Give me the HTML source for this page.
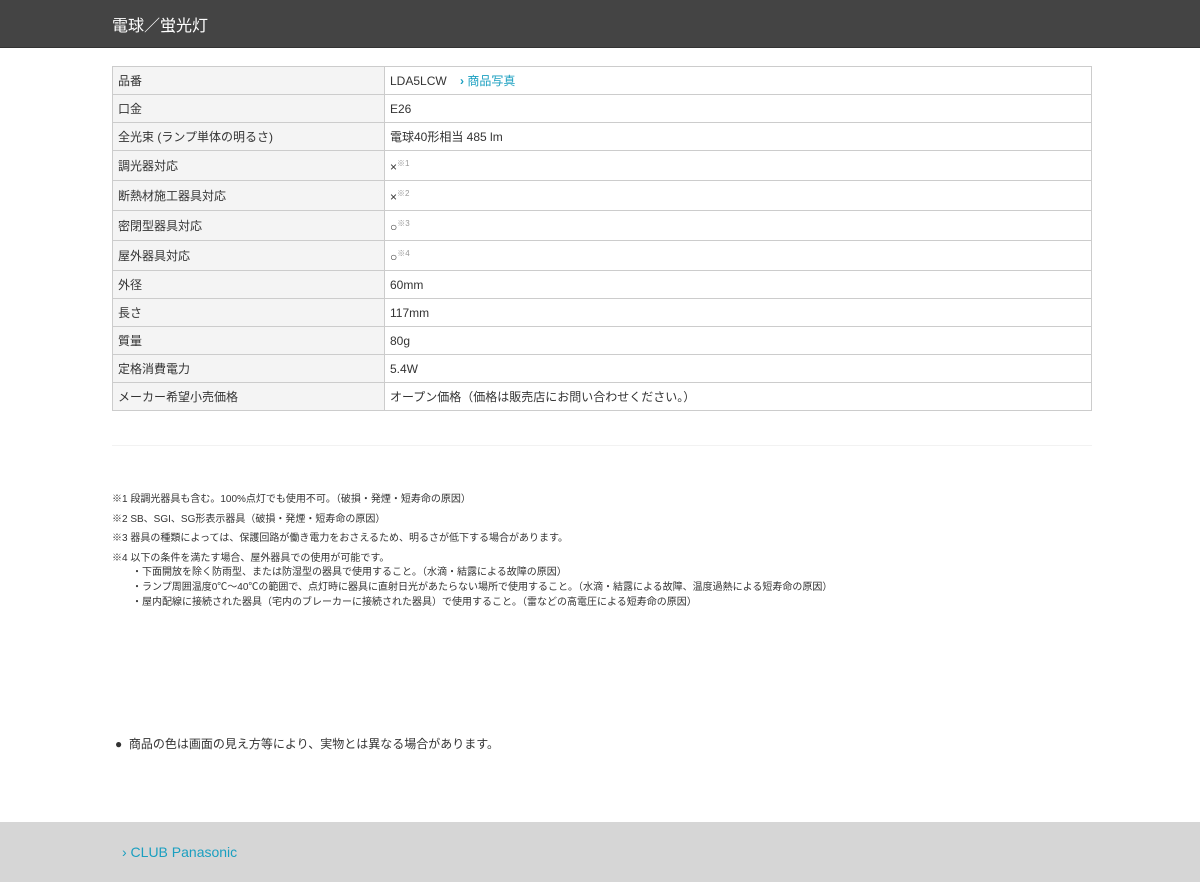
<!DOCTYPE html>
<html><head><meta charset="utf-8"><style>
body{margin:0;width:1200px;height:882px;position:relative;background:#fff;font-family:"Liberation Sans","Noto Sans CJK JP",sans-serif;color:#333;overflow:hidden}
.hd{position:absolute;left:0;top:0;width:1200px;height:47px;background:#444;border-bottom:1px solid #333}
.hd span{position:absolute;left:112px;top:12px;color:#fff;font-size:16px}
table{position:absolute;left:112px;top:66px;width:980px;border-collapse:collapse;font-size:12px}
td{border:1px solid #ccc;padding:0 5px;height:27px}
td.l{background:#f4f4f4;width:261px}
tr.t td{height:29px}
sup{font-size:8px;color:#999;vertical-align:5px}
a{color:#1a9fc0;text-decoration:none}
.sep{position:absolute;left:112px;top:445px;width:980px;border-top:1px solid #f2f2f2}
.notes{position:absolute;left:112px;top:490px;font-size:10px;color:#333}
.notes div{height:19.5px}
.notes .s{height:15px;padding-left:20px}
.b{position:absolute;left:115px;top:735px;font-size:12px}
.ft{position:absolute;left:0;top:822px;width:1200px;height:60px;background:#d6d6d6}
.ft span{position:absolute;left:122px;top:22px;font-size:14px;color:#1a9fc0}
</style></head><body>
<div class="hd"><span>電球／蛍光灯</span></div>
<table>
<tr><td class="l">品番</td><td>LDA5LCW &nbsp;&nbsp;&nbsp;<a><b style="font-weight:bold">›</b> 商品写真</a></td></tr>
<tr><td class="l">口金</td><td>E26</td></tr>
<tr><td class="l">全光束 (ランプ単体の明るさ)</td><td>電球40形相当 485 lm</td></tr>
<tr class="t"><td class="l">調光器対応</td><td>×<sup>※1</sup></td></tr>
<tr class="t"><td class="l">断熱材施工器具対応</td><td>×<sup>※2</sup></td></tr>
<tr class="t"><td class="l">密閉型器具対応</td><td>○<sup>※3</sup></td></tr>
<tr class="t"><td class="l">屋外器具対応</td><td>○<sup>※4</sup></td></tr>
<tr><td class="l">外径</td><td>60mm</td></tr>
<tr><td class="l">長さ</td><td>117mm</td></tr>
<tr><td class="l">質量</td><td>80g</td></tr>
<tr><td class="l">定格消費電力</td><td>5.4W</td></tr>
<tr><td class="l">メーカー希望小売価格</td><td>オープン価格（価格は販売店にお問い合わせください。）</td></tr>
</table>
<div class="sep"></div>
<div class="notes">
<div>※1 段調光器具も含む。100%点灯でも使用不可。（破損・発煙・短寿命の原因）</div>
<div>※2 SB、SGI、SG形表示器具（破損・発煙・短寿命の原因）</div>
<div>※3 器具の種類によっては、保護回路が働き電力をおさえるため、明るさが低下する場合があります。</div>
<div style="height:14px">※4 以下の条件を満たす場合、屋外器具での使用が可能です。</div>
<div class="s">・下面開放を除く防雨型、または防湿型の器具で使用すること。（水滴・結露による故障の原因）</div>
<div class="s">・ランプ周囲温度0℃～40℃の範囲で、点灯時に器具に直射日光があたらない場所で使用すること。（水滴・結露による故障、温度過熱による短寿命の原因）</div>
<div class="s">・屋内配線に接続された器具（宅内のブレーカーに接続された器具）で使用すること。（雷などの高電圧による短寿命の原因）</div>
</div>
<div class="b">●&nbsp; 商品の色は画面の見え方等により、実物とは異なる場合があります。</div>
<div class="ft"><span>› CLUB Panasonic</span></div>
</body></html>
